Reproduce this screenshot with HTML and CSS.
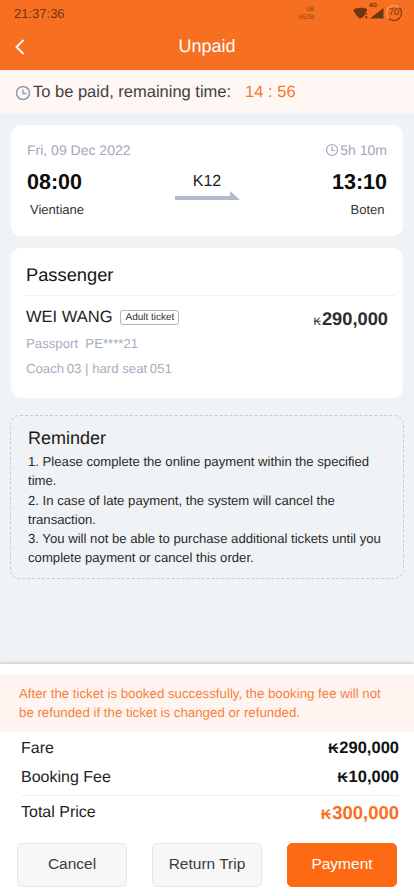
FILE: index.html
```html
<!DOCTYPE html>
<html lang="en">
<head>
<meta charset="utf-8">
<title>Unpaid</title>
<link rel="stylesheet" href="styles.css">
</head>
<body>
<div class="page">
  <header class="header">
    <div class="status">
      <span class="clock">21:37:36</span>
      <div class="status-right">
        <span class="speed">0B<br>652B</span>
        <svg class="wifi" width="16" height="13" viewBox="0 0 18 14"><path d="M0 3C4 0 11 0 15 1.500L16 3 13.500 7.500C13 10 11 11.500 8 12.500 5 11 3 8 0 3Z" fill="#6e3512"/><circle cx="15" cy="7.500" r="1" fill="#6e3512"/><rect x="14" y="10" width="2" height="2.500" fill="#6e3512"/></svg>
        <span class="signal"><span class="net">4G</span><svg width="15" height="14" viewBox="0 0 15 14"><path d="M14.500 2V12.500H1Z" fill="#6e3512"/></svg></span>
        <span class="battery">70</span>
      </div>
    </div>
    <div class="nav">
      <svg class="back" width="12" height="18" viewBox="0 0 12 18"><path d="M9.500 2 2.500 9l7 7" fill="none" stroke="#fff" stroke-width="1.800"/></svg>
      <h1 class="title">Unpaid</h1>
    </div>
  </header>
  <div class="banner">
    <svg class="clock-icon" width="16" height="16" viewBox="0 0 16 16"><circle cx="8" cy="8" r="6.500" fill="none" stroke="#8b9ab5" stroke-width="1.500"/><path d="M8 4.500V8.500H11.500" fill="none" stroke="#8b9ab5" stroke-width="1.300"/></svg>
    <span class="banner-text">To be paid, remaining time:</span>
    <span class="countdown">14 : 56</span>
  </div>
  <main class="content">
    <section class="card trip">
      <div class="row muted">
        <span>Fri, 09 Dec 2022</span>
        <span class="duration"><svg width="14" height="14" viewBox="0 0 14 14"><circle cx="7" cy="7" r="5.500" fill="none" stroke="#9fa7bc" stroke-width="1.200"/><path d="M7 3.500V7.500H10" fill="none" stroke="#9fa7bc" stroke-width="1.200"/></svg>5h 10m</span>
      </div>
      <div class="row times">
        <span class="time">08:00</span>
        <div class="train">
          <span class="train-no">K12</span>
          <svg class="arrow" width="65" height="9" viewBox="0 0 65 9"><path d="M0 5H55V0L65 9H0Z" fill="#b2bbcc"/></svg>
        </div>
        <span class="time">13:10</span>
      </div>
      <div class="row stations">
        <span>Vientiane</span>
        <span>Boten</span>
      </div>
    </section>
    <section class="card passenger">
      <h2 class="card-title">Passenger</h2>
      <div class="pax-main">
        <div class="pax-name">
          <span class="name">WEI WANG</span>
          <span class="tag">Adult ticket</span>
        </div>
        <span class="pax-price"><span class="kip">₭</span>290,000</span>
      </div>
      <p class="pax-line">Passport&nbsp; PE****21</p>
      <p class="pax-line seat">Coach&thinsp;03 | hard seat&thinsp;051</p>
    </section>
    <section class="reminder">
      <h2 class="reminder-title">Reminder</h2>
      <p>1. Please complete the online payment within the specified time.</p>
      <p>2. In case of late payment, the system will cancel the transaction.</p>
      <p>3. You will not be able to purchase additional tickets until you complete payment or cancel this order.</p>
    </section>
  </main>
  <footer class="footer">
    <p class="notice">After the ticket is booked successfully, the booking fee will not be refunded if the ticket is changed or refunded.</p>
    <div class="fees">
      <div class="fee"><span>Fare</span><span class="fee-val"><span class="kip-b">₭</span>290,000</span></div>
      <div class="fee"><span>Booking Fee</span><span class="fee-val"><span class="kip-b">₭</span>10,000</span></div>
      <div class="fee total"><span>Total Price</span><span class="total-val"><span class="kip-t">₭</span>300,000</span></div>
    </div>
    <div class="actions">
      <button class="btn">Cancel</button>
      <button class="btn">Return Trip</button>
      <button class="btn primary">Payment</button>
    </div>
  </footer>
</div>
</body>
</html>
```
FILE: styles.css
```css
* { box-sizing: border-box; }
html, body { margin: 0; padding: 0; }
body { font-family: "Liberation Sans", "DejaVu Sans", sans-serif; text-rendering: geometricPrecision; }
h1, h2, p { margin: 0; font-weight: 400; }
.page { width: 414px; height: 896px; background: #eff3f6; display: flex; flex-direction: column; overflow: hidden; }

.header { height: 70px; background: #f76f21; flex: none; }
.status { height: 26px; padding: 0 12px 0 14px; display: flex; align-items: center; justify-content: space-between; }
.clock { font-size: 13px; color: #6e3512; padding-top: 1px; }
.status-right { display: flex; align-items: center; }
.speed { font-size: 6.500px; line-height: 8px; color: #8c4518; text-align: right; margin-right: 39px; width: 16px; padding-top: 1px; }
.wifi { margin-top: 1px; }
.signal { position: relative; display: flex; margin-left: 0; }
.net { position: absolute; left: 0; top: -3px; font-size: 6px; font-weight: 700; color: #6e3512; }
.battery { width: 16px; height: 16px; margin-left: 2px; border-radius: 50%; border: 1.500px solid #6e3512; border-left-color: #f3a57a; border-top-color: #f3a57a; font-size: 9.500px; line-height: 13px; text-align: center; color: #6e3512; }
.nav { height: 44px; position: relative; display: flex; align-items: center; justify-content: center; }
.back { position: absolute; left: 14px; top: 12px; }
.title { font-size: 18px; color: #fff; padding-bottom: 3px; }

.banner { height: 42px; margin-top: 1px; background: #fff7f3; display: flex; align-items: center; padding-left: 15px; flex: none; font-size: 16.500px; }
.clock-icon { flex: none; margin-top: 1px; }
.banner-text { color: #404040; margin-left: 2px; }
.countdown { color: #f5772c; margin-left: 14px; }

.content { flex: 1; padding: 12px 10px 0 11px; }
.card { background: #fff; border-radius: 10px; width: 392px; }
.row { display: flex; justify-content: space-between; }
.trip { height: 111px; padding: 16px 16px 0 16px; margin-bottom: 12px; }
.muted { font-size: 14px; line-height: 18px; color: #9fa7bc; }
.duration { display: flex; align-items: center; gap: 1px; }
.times { align-items: flex-start; margin-top: 7px; height: 33px; }
.time { font-size: 21.500px; font-weight: 700; line-height: 33px; color: #0c0c0c; }
.train { display: flex; flex-direction: column; align-items: center; }
.train-no { font-size: 16px; line-height: 18px; color: #1c1c1c; margin-top: 7px; }
.arrow { display: block; margin-top: 0; }
.stations { font-size: 13px; line-height: 18px; color: #333; padding: 2px 2.500px 0 3px; }

.passenger { height: 150px; padding: 16px 8px 0 15px; margin-bottom: 17px; }
.card-title { font-size: 18.300px; line-height: 22px; color: #161616; padding-bottom: 9px; border-bottom: 1px solid #eff1f4; }
.pax-main { display: flex; justify-content: space-between; align-items: center; padding: 8px 7px 0 0; }
.pax-name { display: flex; align-items: center; gap: 8px; }
.name { font-size: 16.500px; line-height: 24px; color: #1c1c1c; }
.tag { font-size: 10px; line-height: 13px; height: 15px; padding: 0 4px; border: 1px solid #b5b5b5; border-radius: 3px; color: #333; }
.pax-price { font-size: 18.300px; font-weight: 700; color: #2d2d2d; padding-top: 4px; }
.kip { font-size: 11px; font-weight: 400; margin-right: 1px; }
.pax-line { font-size: 13.200px; line-height: 18px; color: #a6aebf; margin-top: 5px; }
.seat { margin-top: 7px; }

.reminder { width: 394px; height: 164px; margin-left: -1px; padding: 9px 16px 0 17px; border: 1px dashed #c8cbd0; border-radius: 10px; font-size: 13.150px; line-height: 19.300px; color: #2a2a2a; }
.reminder-title { font-size: 18px; line-height: 27px; color: #1a1a1a; }

.footer { height: 232px; background: #fff; padding-top: 11px; flex: none; box-shadow: 0 -1px 3px rgba(0,0,0,.18); }
.notice { height: 57px; padding: 9px 18px 0 19px; background: #fff4f0; color: #f5823c; font-size: 13.280px; line-height: 19.300px; }
.fees { padding: 2px 15px 0 21px; }
.fee { display: flex; justify-content: space-between; align-items: center; height: 29px; font-size: 16px; color: #1f1f1f; }
.fee-val { font-weight: 700; font-size: 16.500px; color: #111; }
.kip-b { font-size: 14px; margin-right: 1px; }
.total { height: 35px; margin-top: 3px; border-top: 1px solid #f0f1f3; }
.total-val { font-weight: 700; font-size: 18.500px; color: #fa6e1c; }
.kip-t { font-size: 14px; margin-right: 1px; }
.actions { display: flex; justify-content: space-between; padding: 0 17px; margin-top: 13px; }
.btn { width: 110px; height: 44px; border-radius: 5px; border: 1px solid #e5e6e8; background: #f7f7f7; color: #3c3c3c; font: 15.500px "Liberation Sans", sans-serif; padding: 0 0 2px; }
.primary { background: #fe6a13; border-color: #fe6a13; color: #fff; }
```
